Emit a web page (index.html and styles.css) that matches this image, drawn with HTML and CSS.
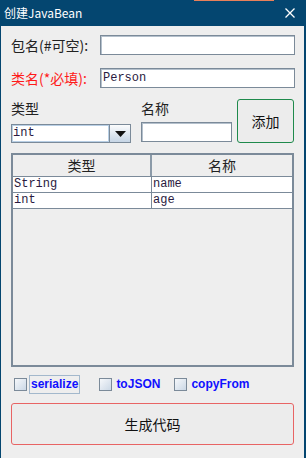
FILE: index.html
```html
<!DOCTYPE html>
<html>
<head>
<meta charset="utf-8">
<link rel="stylesheet" href="styles.css">
</head>
<body>
<div class="window">
  <div class="titlebar">
    <span class="title">创建JavaBean</span>
    <svg class="close" width="10" height="10" viewBox="0 0 10 10"><path d="M0.5 0.5 L9.5 9.5 M9.5 0.5 L0.5 9.5" stroke="#fff" stroke-width="1.3" fill="none"/></svg>
    <span class="glint"></span>
  </div>
  <div class="content">
    <div class="row row-pkg">
      <span class="lbl">包名(#可空):</span>
      <div class="input"></div>
    </div>
    <div class="row row-cls">
      <span class="lbl red">类名(*必填):</span>
      <div class="input mono">Person</div>
    </div>
    <div class="fields">
      <span class="flabel l-type">类型</span>
      <span class="flabel l-name">名称</span>
      <button class="btn-add">添加</button>
      <div class="combo">
        <span class="combo-text mono">int</span>
        <span class="combo-arrow"><svg width="11" height="6" viewBox="0 0 11 6"><path d="M0 0 H11 L5.5 6 Z" fill="#111"/></svg></span>
      </div>
      <div class="input name-input"></div>
    </div>
    <div class="table">
      <div class="thead">
        <div class="th">类型</div>
        <div class="th">名称</div>
      </div>
      <div class="tr">
        <div class="td mono">String</div>
        <div class="td mono">name</div>
      </div>
      <div class="tr">
        <div class="td mono">int</div>
        <div class="td mono">age</div>
      </div>
    </div>
    <div class="checks">
      <span class="cb cb1"></span><span class="cblabel focus">serialize</span>
      <span class="cb cb2"></span><span class="cblabel">toJSON</span>
      <span class="cb cb3"></span><span class="cblabel">copyFrom</span>
    </div>
    <button class="btn-gen">生成代码</button>
  </div>
</div>
</body>
</html>
```

FILE: styles.css
```css
html, body {
  margin: 0;
  padding: 0;
  background: #eeeeee;
}

.window {
  width: 306px;
  height: 458px;
  box-sizing: border-box;
  border-left: 1px solid #044670;
  border-right: 2px solid #044670;
  background: #eeeeee;
  display: flex;
  flex-direction: column;
  font-family: "Noto Sans CJK SC", "Noto Sans", sans-serif;
}

.titlebar {
  position: relative;
  height: 26px;
  flex: none;
  background: #044670;
  margin: 0 -2px 0 -1px;
  padding: 0 11px 0 4px;
  display: flex;
  align-items: center;
  justify-content: space-between;
  color: #ffffff;
  font-size: 12px;
}

.title {
  line-height: 26px;
}

.close {
  display: block;
}

.glint {
  position: absolute;
  top: 0;
  left: 194px;
  width: 80px;
  height: 1px;
  background: #e8805a;
}

.content {
  padding: 0 9px 0 10px;
  display: flex;
  flex-direction: column;
}

.row {
  display: flex;
  align-items: center;
}

.row-pkg {
  margin-top: 9px;
  height: 20px;
}

.row-cls {
  margin-top: 13px;
  height: 20px;
}

.lbl {
  width: 89px;
  flex: none;
  font-size: 14px;
  color: #222222;
  white-space: nowrap;
}

.lbl.red {
  color: #ff1a1a;
}

.input {
  box-sizing: border-box;
  flex: 1;
  height: 20px;
  background: #ffffff;
  border: 1px solid #7b8a99;
  box-shadow: inset 1px 1px 0 #b4c0cc;
}

.mono {
  font-family: "Liberation Mono", "Courier New", monospace;
  font-size: 12px;
  color: #2a1a40;
}

.row-cls .input {
  line-height: 18px;
  padding-left: 2px;
}

.fields {
  margin-top: 11px;
  display: grid;
  grid-template-columns: 120px 91px 57px;
  grid-template-rows: 23px 21px;
  column-gap: 10px;
  margin-right: 1px;
}

.fields {
  column-gap: 0;
  grid-template-columns: 120px 10px 91px 5px 57px;
}

.flabel {
  font-size: 14px;
  color: #222222;
  line-height: 18px;
}

.l-type {
  grid-column: 1;
  grid-row: 1;
}

.l-name {
  grid-column: 3;
  grid-row: 1;
}

.btn-add {
  grid-column: 5;
  grid-row: 1 / span 2;
  height: 44px;
  box-sizing: border-box;
  border: 1px solid #1f8a4c;
  border-radius: 3px;
  background: #ececec;
  font-family: "Noto Sans CJK SC", sans-serif;
  font-size: 14px;
  color: #111111;
  padding: 0;
}

.combo {
  grid-column: 1;
  grid-row: 2;
  align-self: end;
  height: 19px;
  box-sizing: border-box;
  border: 1px solid #7b8a99;
  display: flex;
  background: #ffffff;
}

.combo-text {
  flex: 1;
  line-height: 17px;
  padding-left: 1px;
  box-shadow: inset 1px 1px 0 #b8cfe5, inset -1px -1px 0 #b8cfe5;
}

.combo-arrow {
  width: 20px;
  flex: none;
  border-left: 1px solid #7b8a99;
  background: linear-gradient(#fbfcfd, #c6d5e5);
  display: flex;
  align-items: center;
  justify-content: center;
}

.combo-arrow svg {
  display: block;
}

.name-input {
  grid-column: 3;
  grid-row: 2;
  height: 20px;
  align-self: start;
}

.table {
  margin-top: 10px;
  margin-right: 1px;
  height: 214px;
  box-sizing: border-box;
  border: 2px solid #7b8a99;
  display: flex;
  flex-direction: column;
}

.thead, .tr {
  display: grid;
  grid-template-columns: 139px 1fr;
}

.thead {
  height: 21px;
  border-bottom: 1px solid #7b8a99;
  background: #eeeeee;
}

.th {
  font-size: 14px;
  color: #222222;
  text-align: center;
  line-height: 21px;
}

.th:first-child {
  border-right: 2px solid #8b9aa8;
}

.tr {
  height: 15px;
  border-bottom: 1px solid #7b8a99;
  background: #ffffff;
}

.td {
  line-height: 15px;
  padding-left: 1px;
}

.td:first-child {
  border-right: 1px solid #7b8a99;
}

.checks {
  margin-top: 8px;
  height: 19px;
  display: flex;
  align-items: center;
}

.cb {
  width: 13px;
  height: 13px;
  box-sizing: border-box;
  border: 1px solid #7b8a99;
  background: linear-gradient(135deg, #f6f8fb, #cbd8e6);
  flex: none;
}

.cb1 { margin-left: 3px; }
.cb2 { margin-left: 19px; }
.cb3 { margin-left: 12px; }

.cblabel {
  margin-left: 2px;
  padding: 0 1px;
  height: 19px;
  box-sizing: border-box;
  border: 1px solid transparent;
  font-family: "Liberation Sans", Arial, sans-serif;
  font-weight: bold;
  font-size: 12px;
  line-height: 17px;
  color: #1010ff;
}

.cblabel.focus {
  border-color: #a3b8cc;
}

.btn-gen {
  margin-top: 9px;
  margin-right: 1px;
  height: 42px;
  box-sizing: border-box;
  border: 1px solid #e86464;
  border-radius: 3px;
  background: #ececec;
  font-family: "Noto Sans CJK SC", sans-serif;
  font-size: 14px;
  color: #111111;
  padding: 0;
}
```
